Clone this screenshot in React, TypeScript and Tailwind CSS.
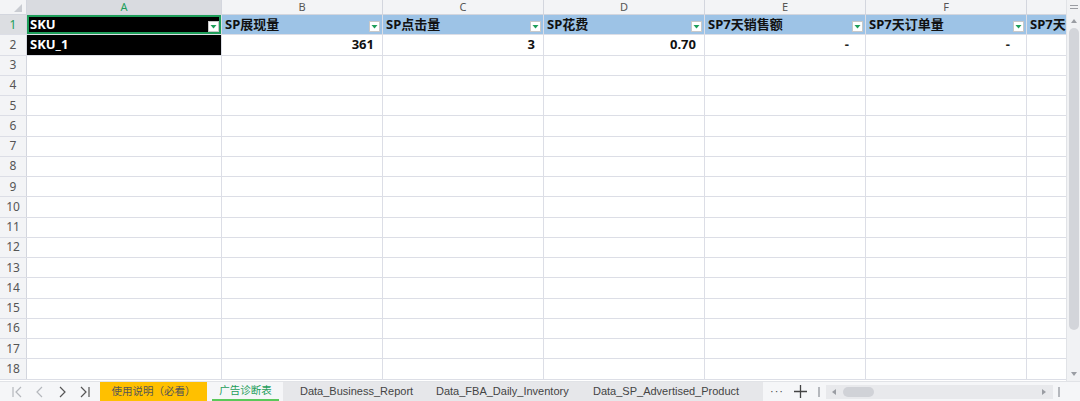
import React from "react";

const font = { fontFamily: '"Noto Sans", "Noto Sans CJK SC", sans-serif' };
const tabFont = { fontFamily: '"Liberation Sans", "Noto Sans CJK SC", sans-serif' };

const cols = [
  { key: "A", w: "w-[195px]" },
  { key: "B", w: "w-[161px]" },
  { key: "C", w: "w-[161px]" },
  { key: "D", w: "w-[161px]" },
  { key: "E", w: "w-[161px]" },
  { key: "F", w: "w-[161px]" },
  { key: "G", w: "w-[161px]" },
];

const headers = ["SKU", "SP展现量", "SP点击量", "SP花费", "SP7天销售额", "SP7天订单量", "SP7天销售量"];
const row2 = ["SKU_1", "361", "3", "0.70", "-", "-", ""];

function FilterBtn() {
  return (
    <div className="absolute right-[2px] bottom-[2px] w-[11px] h-[11px] bg-white border border-[#c8c8c8] flex items-center justify-center">
      <svg width="7" height="4" viewBox="0 0 7 4">
        <polygon points="0.5,0 6.5,0 3.5,3.5" fill="#1e9e5a" />
      </svg>
    </div>
  );
}

export default function App() {
  const rows = Array.from({ length: 18 }, (_, i) => i + 1);
  return (
    <div className="w-[1080px] h-[401px] flex flex-col bg-white overflow-hidden" style={font}>
      <div className="flex h-[381px]">
        <div className="w-[1066px] overflow-hidden flex flex-col">
          {/* column header */}
          <div className="flex h-[15px] bg-[#f3f4f6] border-b border-[#d3d6de] shrink-0">
            <div className="w-[27px] shrink-0 border-r border-[#d3d6de] relative">
              <svg className="absolute right-[4px] bottom-[2px]" width="8" height="8" viewBox="0 0 8 8">
                <polygon points="8,0 8,8 0,8" fill="#c9ccd2" />
              </svg>
            </div>
            {cols.map((c) => (
              <div
                key={c.key}
                className={`${c.w} shrink-0 border-r border-[#d3d6de] flex items-center justify-center text-[11px] leading-[12px] ${
                  c.key === "A" ? "bg-[#d9dbe0] text-[#1e9e5a]" : "text-[#555]"
                }`}
              >
                {c.key}
              </div>
            ))}
          </div>
          {rows.map((r) => (
            <div key={r} className="flex h-[20.25px] shrink-0 border-b border-[#dcdee6]">
              <div
                className={`w-[27px] shrink-0 border-r border-[#d3d6de] flex items-center justify-center text-[12px] ${
                  r === 1 ? "bg-[#dcdee2] text-[#1e9e5a]" : "bg-[#f3f4f6] text-[#555]"
                }`}
              >
                {r}
              </div>
              {cols.map((c, ci) => {
                let cls = `${c.w} shrink-0 border-r border-[#dcdee6] relative flex items-center text-[13px] font-bold whitespace-nowrap overflow-hidden`;
                let content: React.ReactNode = null;
                if (r === 1) {
                  cls += ci === 0 ? " bg-black text-white pl-[3px]" : " bg-[#9dc3e6] text-[#111] pl-[3px]";
                  content = (
                    <>
                      <span>{headers[ci]}</span>
                      {ci < 6 && <FilterBtn />}
                      {ci === 0 && (
                        <div className="absolute inset-0 border-2 border-[#1e9e5a] pointer-events-none" />
                      )}
                    </>
                  );
                } else if (r === 2) {
                  if (ci === 0) {
                    cls += " bg-black text-white pl-[3px]";
                  } else if (ci === 4 || ci === 5) {
                    cls += " justify-end pr-[16px] text-[#222]";
                  } else {
                    cls += " justify-end pr-[8px] text-[#111]";
                  }
                  content = row2[ci];
                }
                return (
                  <div key={c.key} className={cls}>
                    {content}
                  </div>
                );
              })}
            </div>
          ))}
        </div>
        {/* vertical scrollbar */}
        <div className="w-[14px] bg-[#f1f2f4] border-l border-[#e1e3e7] flex flex-col items-center">
          <div className="h-[14px] flex flex-col items-center justify-center gap-[2px]">
            <div className="w-[8px] h-[1px] bg-[#9a9da3]" />
            <div className="w-[8px] h-[1px] bg-[#9a9da3]" />
          </div>
          <div className="h-[14px] flex items-center justify-center">
            <svg width="6" height="4" viewBox="0 0 6 4">
              <polygon points="0,4 6,4 3,0" fill="#9a9da3" />
            </svg>
          </div>
          <div className="w-[10px] h-[302px] rounded-[5px] bg-[#d3d5da]" />
          <div className="flex-1" />
          <div className="h-[14px] flex items-center justify-center">
            <svg width="6" height="4" viewBox="0 0 6 4">
              <polygon points="0,0 6,0 3,4" fill="#9a9da3" />
            </svg>
          </div>
        </div>
      </div>
      {/* bottom tab bar */}
      <div className="h-[20px] flex items-center bg-[#f5f6f8] border-t border-[#e1e3e7] text-[11px]" style={tabFont}>
        <div className="w-[100px] shrink-0 flex items-center pl-[11px] gap-[12px] text-[#666]">
          <svg width="12" height="12" viewBox="0 0 12 12" fill="none" stroke="#b5b8bd" strokeWidth="1.2">
            <path d="M2 1v10M10 1L5 6l5 5" />
          </svg>
          <svg width="10" height="12" viewBox="0 0 10 12" fill="none" stroke="#b5b8bd" strokeWidth="1.2">
            <path d="M7 1L2 6l5 5" />
          </svg>
          <svg width="10" height="12" viewBox="0 0 10 12" fill="none" stroke="#555" strokeWidth="1.2">
            <path d="M3 1l5 5-5 5" />
          </svg>
          <svg width="12" height="12" viewBox="0 0 12 12" fill="none" stroke="#555" strokeWidth="1.2">
            <path d="M2 1l5 5-5 5M10 1v10" />
          </svg>
        </div>
        <div className="w-[107px] h-full shrink-0 bg-[#ffc000] flex items-center justify-center text-[#555] text-[10.5px]">
          使用说明（必看）
        </div>
        <div className="w-[5px]" />
        <div className="w-[67px] h-full shrink-0 flex items-center justify-center text-[#1e9e5a] text-[10.5px] border-b-2 border-[#5ac85a]">
          广告诊断表
        </div>
        <div className="w-[4px]" />
        <div className="w-[480px] h-full shrink-0 bg-[#e6e7ea] flex items-center text-[#444] whitespace-nowrap">
          <span className="pl-[17px] w-[153px] shrink-0">Data_Business_Report</span>
          <span className="w-[157px] shrink-0">Data_FBA_Daily_Inventory</span>
          <span>Data_SP_Advertised_Product</span>
        </div>
        <div className="w-[55px] shrink-0 flex items-center gap-[10px] pl-[7px] text-[#444]">
          <span className="leading-none tracking-[1px]">···</span>
          <svg width="13" height="13" viewBox="0 0 13 13" stroke="#444" strokeWidth="1.3">
            <path d="M6.5 0v13M0 6.5h13" />
          </svg>
        </div>
        <div className="w-[2px] h-[10px] border-x border-[#b5b8bd] mr-[6px]" />
        <div className="w-[227px] h-[14px] bg-[#e8e9ec] flex items-center relative">
          <svg className="absolute left-[6px]" width="4" height="6" viewBox="0 0 4 6">
            <polygon points="4,0 4,6 0,3" fill="#9a9da3" />
          </svg>
          <div className="absolute left-[17px] w-[31px] h-[10px] rounded-[5px] bg-[#d0d2d7]" />
          <svg className="absolute right-[7px]" width="4" height="6" viewBox="0 0 4 6">
            <polygon points="0,0 0,6 4,3" fill="#9a9da3" />
          </svg>
        </div>
        <div className="w-[2px] h-[10px] border-x border-[#b5b8bd] ml-[5px]" />
      </div>
    </div>
  );
}
